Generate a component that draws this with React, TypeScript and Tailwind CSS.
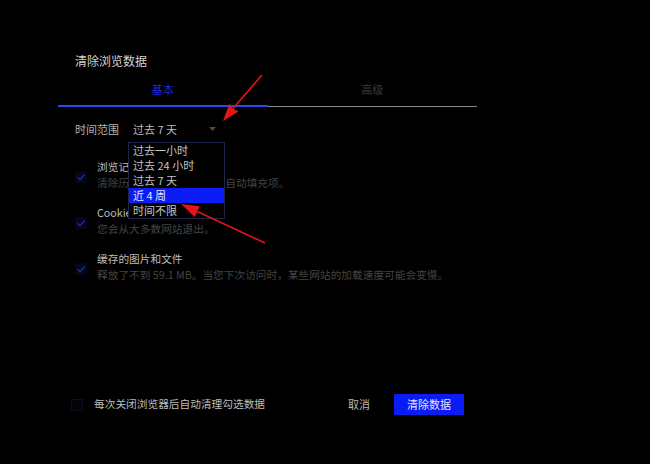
import React from 'react'

const font = "font-['Noto_Sans_CJK_SC','Noto_Sans',sans-serif]"

const ranges = ['过去一小时', '过去 24 小时', '过去 7 天', '近 4 周', '时间不限']

const items = [
  { label: '浏览记录', desc: '清除历史记录和地址栏中的自动填充项。' },
  { label: 'Cookie 及其他网站数据', desc: '您会从大多数网站退出。' },
  { label: '缓存的图片和文件', desc: '释放了不到 59.1 MB。当您下次访问时，某些网站的加载速度可能会变慢。' },
]

function Check () {
  return (
    <div className="w-[12px] h-[12px] mt-[4px] rounded-[1px] bg-[#04061c] flex items-center justify-center shrink-0">
      <svg width="10" height="10" viewBox="0 0 10 10" fill="none">
        <path d="M1.5 5.2 L4 7.6 L8.6 2.4" stroke="#2633b0" strokeWidth="1.1" />
      </svg>
    </div>
  )
}

function Arrow ({ tail, base, p1, p2, tip }: { tail: number[], base: number[], p1: number[], p2: number[], tip: number[] }) {
  return (
    <g>
      <line x1={tail[0]} y1={tail[1]} x2={base[0]} y2={base[1]} stroke="#e5141b" strokeWidth="1.6" />
      <polygon points={`${tip[0]},${tip[1]} ${p1[0]},${p1[1]} ${base[0]},${base[1]} ${p2[0]},${p2[1]}`} fill="#e5141b" />
    </g>
  )
}

export default function App (): React.JSX.Element {
  return (
    <div className={`relative w-[650px] h-[464px] bg-black overflow-hidden ${font}`}>
      <div className="w-[419px] h-[464px] ml-[58px] pt-[53px] pb-[49px] flex flex-col">
        <div className="pl-[17px] text-[12px] leading-[16px] text-[#d2d2d2]">清除浏览数据</div>

        <div className="flex items-end mt-[12px]">
          <div className="flex-1 flex flex-col items-center">
            <span className="text-[11px] leading-[16px] text-[#1a28d8] pb-[8px]">基本</span>
            <div className="w-full h-[2px] bg-[#2a48f0]" />
          </div>
          <div className="flex-1 flex flex-col items-center">
            <span className="text-[11px] leading-[16px] text-[#3c3c3c] pb-[9px]">高级</span>
            <div className="w-full h-[1px] bg-[#8a8a8a]" />
          </div>
        </div>

        <div className="relative flex items-center mt-[14px] pl-[17px] h-[16px] text-[11px]">
          <span className="text-[#b4b4b4] w-[53px]">时间范围</span>
          <div className="flex items-center w-[97px] pl-[5px] pr-[9px] justify-between text-[#bdbdbd]">
            <span>过去 7 天</span>
            <svg width="7" height="5" viewBox="0 0 7 5"><path d="M0 0 L7 0 L3.5 4 Z" fill="#4a4a4a" /></svg>
          </div>
          <div className="absolute left-[70px] top-[21px] w-[97px] border border-[#1d2548] bg-black z-10">
            {ranges.map((r) => (
              <div
                key={r}
                className={`h-[15px] leading-[15px] pl-[4px] text-[11px] ${r === '近 4 周' ? 'bg-[#0b1cf4] text-[#e6e6ff]' : 'text-[#c4c4c4]'}`}
              >
                {r}
              </div>
            ))}
          </div>
        </div>

        <div className="flex flex-col gap-[14px] mt-[22px] pl-[17px]">
          {items.map((it) => (
            <div key={it.label} className="flex items-center gap-[10px]">
              <Check />
              <div className="flex flex-col text-[10.7px] leading-[16px]">
                <span className="text-[#bcbcbc]">{it.label}</span>
                <span className="text-[#444444]">{it.desc}</span>
              </div>
            </div>
          ))}
        </div>

        <div className="mt-auto flex items-center h-[21px] pl-[13px] pr-[13px] text-[10.7px]">
          <div className="w-[12px] h-[12px] border border-[#0d0f1e] bg-[#030308]" />
          <span className="ml-[11px] text-[#bdbdbd]">每次关闭浏览器后自动清理勾选数据</span>
          <span className="ml-auto mr-[24px] text-[#b8b8b8] text-[11px]">取消</span>
          <button className="w-[70px] h-[21px] bg-[#0a1cf5] text-[#e4e6ff] text-[11px]">清除数据</button>
        </div>
      </div>

      <svg className="absolute inset-0 pointer-events-none z-20" width="650" height="464">
        <Arrow tail={[262, 75]} base={[233, 108.5]} p1={[238.6, 111.5]} p2={[229.4, 103.5]} tip={[223, 121]} />
        <Arrow tail={[265, 243]} base={[197.3, 211.6]} p1={[199.8, 206.2]} p2={[194.8, 217.0]} tip={[181, 204]} />
      </svg>
    </div>
  )
}
